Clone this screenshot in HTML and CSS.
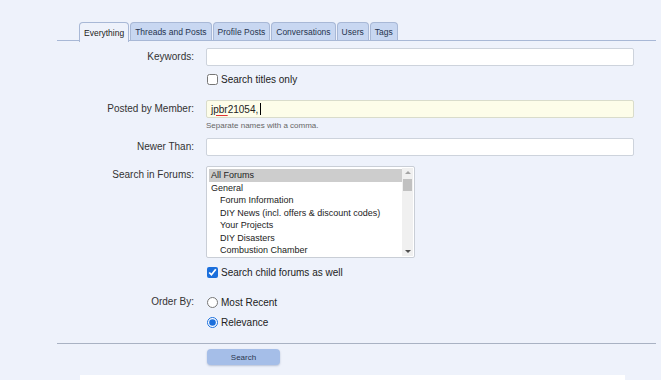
FILE: index.html
```html
<!DOCTYPE html>
<html>
	<head>
		<meta http-equiv="Content-Type" content="text/html; charset=UTF-8">
		<title>Search</title>
		<link rel="stylesheet" href="styles.css">
	</head>
	<body>
		<div class="page">
			<div class="tabs">
				<span class="tab tab-active">Everything</span>
				<span class="tab">Threads and Posts</span>
				<span class="tab">Profile Posts</span>
				<span class="tab">Conversations</span>
				<span class="tab">Users</span>
				<span class="tab">Tags</span>
			</div>
			<div class="form">
				<div class="row row-keywords">
					<div class="label">Keywords:</div>
					<div class="field"><div class="text-input"></div></div>
				</div>
				<div class="row row-check">
					<div></div>
					<label class="field check"><input type="checkbox"> Search titles only</label>
				</div>
				<div class="row row-member">
					<div class="label">Posted by Member:</div>
					<div class="field">
						<div class="text-input text-input-focus"><span class="spell">jpbr</span>21054,<span class="caret"></span></div>
						<div class="hint">Separate names with a comma.</div>
					</div>
				</div>
				<div class="row row-newer">
					<div class="label">Newer Than:</div>
					<div class="field"><div class="text-input"></div></div>
				</div>
				<div class="row row-forums">
					<div class="label">Search in Forums:</div>
					<div class="field">
						<div class="listbox">
							<div class="listbox-items">
								<div class="opt opt-sel">All Forums</div>
								<div class="opt">General</div>
								<div class="opt opt-sub">Forum Information</div>
								<div class="opt opt-sub">DIY News (incl. offers &amp; discount codes)</div>
								<div class="opt opt-sub">Your Projects</div>
								<div class="opt opt-sub">DIY Disasters</div>
								<div class="opt opt-sub">Combustion Chamber</div>
							</div>
							<div class="scroll">
								<div class="scroll-up"></div>
								<div class="scroll-thumb"></div>
								<div class="scroll-track"></div>
								<div class="scroll-down"></div>
							</div>
						</div>
					</div>
				</div>
				<div class="row row-child">
					<div></div>
					<label class="field check"><input type="checkbox" checked> Search child forums as well</label>
				</div>
				<div class="row row-order">
					<div class="label">Order By:</div>
					<div class="field">
						<label class="check"><input type="radio" name="order"> Most Recent</label>
						<label class="check check-second"><input type="radio" name="order" checked> Relevance</label>
					</div>
				</div>
			</div>
			<div class="submit-row">
				<div></div>
				<div><span class="button">Search</span></div>
			</div>
			<div class="bottom-box"></div>
		</div>
	</body>
</html>
```

FILE: styles.css
```css
body{margin: 0px; background: #eef2fb; font-family: "Liberation Sans", Arial, sans-serif; font-size: 10px; color: #222;}
.page{width: 599px; margin-left: 57px; padding-top: 22px;}
.tabs{display: flex; padding-left: 22px; height: 18px; border-bottom: 1px solid #a8b8d6;}
.tab{display: flex; align-items: center; padding: 0px 4px; margin-right: 1px; background: #c8d7f1; border: 1px solid #a8b8d6; border-bottom: none; border-radius: 4px 4px 0px 0px; font-size: 8.5px; color: #26344f;}
.tab-active{background: #eef2fb; color: #222; height: 19px;}
.form{padding-top: 7px;}
.row{display: grid; grid-template-columns: 137px 428px; column-gap: 12px;}
.label{text-align: right; font-size: 10px; line-height: 18px; color: #333;}
.text-input{height: 16px; background: #fff; border: 1px solid #cdd3dc; border-radius: 2px; display: flex; align-items: center; padding-left: 4px; font-size: 10px;}
.text-input-focus{background: #fdfde9; border-color: #d9dccb;}
.spell{text-decoration: underline #d33; text-decoration-thickness: 1px; text-underline-offset: 2px;}
.caret{display: inline-block; width: 1px; height: 12px; background: #000; margin-left: 2px;}
.row-check{margin-top: 4px;}
.check{display: flex; align-items: center; font-size: 10px; height: 18px; color: #222;}
.check input{margin: 0px 3px 0px 1px; width: 11px; height: 11px; accent-color: #1b6fdc;}
.row-member{margin-top: 12px;}
.hint{font-size: 8px; color: #666; margin-top: 3px; height: 12px;}
.row-newer{margin-top: 5px;}
.row-forums{margin-top: 10px;}
.listbox{display: flex; width: 207px; height: 90px; background: #fff; border: 1px solid #c9ced6; border-radius: 2px;}
.listbox-items{flex: 1; padding: 2px 0px 0px 2px; overflow: hidden;}
.opt{height: 12.5px; line-height: 12.5px; padding-left: 2px; font-size: 9px; color: #222; white-space: nowrap;}
.opt-sel{background: #cdcdcd;}
.opt-sub{padding-left: 11px;}
.scroll{width: 11px; display: flex; flex-direction: column; background: #f0f0f0; margin: 1px 1px 1px 0px;}
.scroll-up, .scroll-down{height: 9px; display: flex; justify-content: center; align-items: center;}
.scroll-up::after{content: ""; border: 3px solid transparent; border-bottom: 3px solid #a3a3a3; border-top: none;}
.scroll-down::after{content: ""; border: 3px solid transparent; border-top: 3px solid #505050; border-bottom: none;}
.scroll-thumb{height: 12px; margin: 2px 1px 0px 1px; background: #c1c1c1;}
.scroll-track{flex: 1;}
.row-child{margin-top: 5px;}
.row-order{margin-top: 12px;}
.check-second{margin-top: 2px;}
.submit-row{display: grid; grid-template-columns: 137px 428px; column-gap: 13px; margin-top: 12px; padding-top: 5px; border-top: 1px solid #a9b2c3;}
.button{display: flex; justify-content: center; align-items: center; width: 73px; height: 16px; background: #a5bee8; border-radius: 4px; box-shadow: 0px 1px 2px rgba(80, 100, 140, 0.35); font-size: 8px; color: #2b3650;}
.bottom-box{margin: 10px 31px 0px 23px; height: 20px; background: #fff;}
```
